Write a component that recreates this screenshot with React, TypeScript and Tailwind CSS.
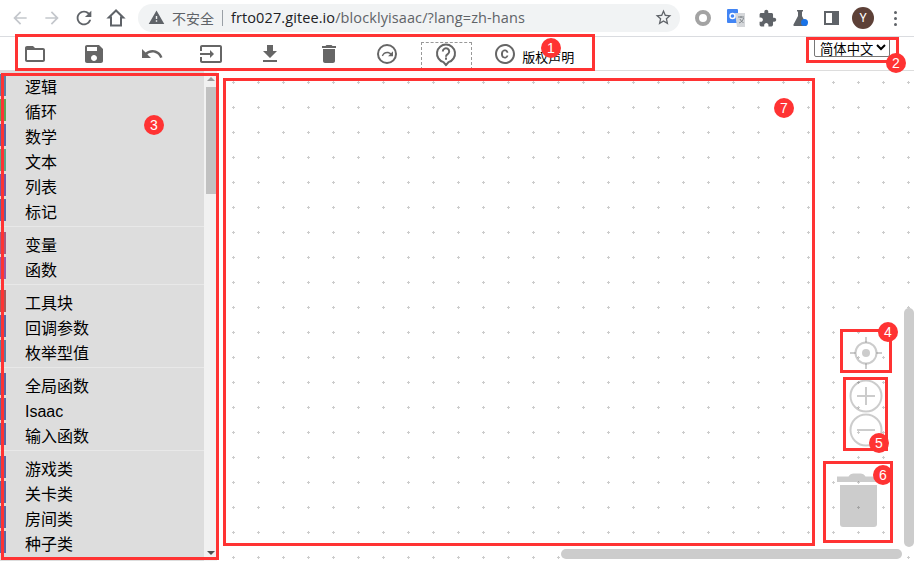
import React from "react";

const RED = "border-[#ff3333]";

function Mi({ d, size = 24, color = "#666", className = "" }: { d: string; size?: number; color?: string; className?: string }) {
  return (
    <svg width={size} height={size} viewBox="0 0 24 24" fill={color} className={className}>
      <path d={d} />
    </svg>
  );
}

const P = {
  back: "M20 11H7.83l5.59-5.59L12 4l-8 8 8 8 1.41-1.41L7.83 13H20v-2z",
  fwd: "M12 4l-1.41 1.41L16.17 11H4v2h12.17l-5.58 5.59L12 20l8-8z",
  refresh: "M17.65 6.35C16.2 4.9 14.21 4 12 4c-4.42 0-7.99 3.58-7.99 8s3.57 8 7.99 8c3.73 0 6.84-2.55 7.73-6h-2.08c-.82 2.33-3.04 4-5.65 4-3.31 0-6-2.69-6-6s2.69-6 6-6c1.66 0 3.14.69 4.22 1.78L13 11h7V4l-2.35 2.35z",
  warn: "M1 21h22L12 2 1 21zm12-3h-2v-2h2v2zm0-4h-2v-4h2v4z",
  star: "M22 9.24l-7.19-.62L12 2 9.19 8.63 2 9.24l5.46 4.73L5.82 21 12 17.27 18.18 21l-1.63-7.03L22 9.24zM12 15.4l-3.76 2.27 1-4.28-3.32-2.88 4.38-.38L12 6.1l1.71 4.04 4.38.38-3.32 2.88 1 4.28L12 15.4z",
  ext: "M20.5 11H19V7c0-1.1-.9-2-2-2h-4V3.5C13 2.12 11.88 1 10.5 1S8 2.12 8 3.5V5H4c-1.1 0-1.99.9-1.99 2v3.8H3.5c1.49 0 2.7 1.21 2.7 2.7s-1.21 2.7-2.7 2.7H2V20c0 1.1.9 2 2 2h3.8v-1.5c0-1.49 1.21-2.7 2.7-2.7 1.49 0 2.7 1.21 2.7 2.7V22H17c1.1 0 2-.9 2-2v-4h1.5c1.38 0 2.5-1.12 2.5-2.5S21.88 11 20.5 11z",
  folder: "M20 6h-8l-2-2H4c-1.1 0-1.99.9-1.99 2L2 18c0 1.1.9 2 2 2h16c1.1 0 2-.9 2-2V8c0-1.1-.9-2-2-2zm0 12H4V8h16v10z",
  save: "M17 3H5c-1.11 0-2 .9-2 2v14c0 1.1.89 2 2 2h14c1.1 0 2-.9 2-2V7l-4-4zm-5 16c-1.66 0-3-1.34-3-3s1.34-3 3-3 3 1.34 3 3-1.34 3-3 3zm3-10H5V5h10v4z",
  undo: "M12.5 8c-2.65 0-5.05.99-6.9 2.6L2 7v9h9l-3.62-3.62c1.39-1.16 3.16-1.88 5.12-1.88 3.54 0 6.55 2.31 7.6 5.5l2.37-.78C21.08 11.03 17.15 8 12.5 8z",
  redo: "M18.4 10.6C16.55 8.99 14.15 8 11.5 8c-4.65 0-8.58 3.03-9.96 7.22L3.9 16c1.05-3.19 4.05-5.5 7.6-5.5 1.95 0 3.73.72 5.12 1.88L13 16h9V7l-3.6 3.6z",
  input: "M21 3.01H3c-1.1 0-2 .9-2 2V9h2V4.99h18v14.03H3V15H1v4.01c0 1.1.9 1.98 2 1.98h18c1.1 0 2-.88 2-1.98v-14c0-1.11-.9-2-2-2zM11 16l4-4-4-4v3H1v2h10v3z",
  dl: "M19 9h-4V3H9v6H5l7 7 7-7zM5 18v2h14v-2H5z",
  del: "M6 19c0 1.1.9 2 2 2h8c1.1 0 2-.9 2-2V7H6v12zM19 4h-3.5l-1-1h-5l-1 1H5v2h14V4z",
  copy: "M10.08 10.86c.05-.33.16-.62.3-.87s.34-.46.59-.62c.24-.15.54-.22.91-.23.23.01.44.05.63.13.2.09.38.21.52.36s.25.33.34.53.13.42.14.64h1.79c-.02-.47-.11-.9-.28-1.29s-.4-.73-.7-1.01-.66-.5-1.08-.66-.88-.23-1.39-.23c-.65 0-1.22.11-1.7.34s-.88.53-1.2.92-.56.84-.71 1.36S8 11.29 8 11.87v.27c0 .58.08 1.12.23 1.64s.39.97.71 1.35.72.69 1.2.91c.48.22 1.05.34 1.7.34.47 0 .91-.08 1.32-.23s.77-.36 1.08-.63.56-.58.74-.94.29-.74.3-1.15h-1.79c-.01.21-.06.4-.15.58s-.21.33-.36.46-.32.23-.52.3c-.19.07-.39.09-.6.1-.36-.01-.66-.08-.89-.23-.25-.16-.45-.37-.59-.62s-.25-.55-.3-.88-.08-.67-.08-1v-.27c0-.35.03-.68.08-1.01zM12 2C6.48 2 2 6.48 2 12s4.48 10 10 10 10-4.48 10-10S17.52 2 12 2zm0 18c-4.41 0-8-3.59-8-8s3.59-8 8-8 8 3.59 8 8-3.59 8-8 8z",
};

function BrowserBar() {
  return (
    <div className="h-[37px] shrink-0 bg-white border-b border-[#dadce0] flex items-center">
      <div className="w-[138px] flex items-center shrink-0">
        <div className="w-[36px] flex justify-center ml-[2px]"><Mi d={P.back} size={20} color="#c4c7cc" /></div>
        <div className="w-[28px] flex justify-center"><Mi d={P.fwd} size={20} color="#c4c7cc" /></div>
        <div className="w-[36px] flex justify-center"><Mi d={P.refresh} size={22} color="#5f6368" /></div>
        <div className="w-[28px] flex justify-center">
          <svg width="20" height="20" viewBox="0 0 20 20" fill="none" stroke="#5f6368" strokeWidth="2">
            <path d="M10 2.500 2.800 9.500H5v8h10v-8h2.200z" strokeLinejoin="miter" />
          </svg>
        </div>
      </div>
      <div className="w-[542px] h-[28px] mb-[1px] rounded-full bg-[#f1f3f4] flex items-center pl-[10px] pr-[7px] shrink-0">
        <Mi d={P.warn} size={17} color="#5f6368" />
        <span className="ml-[7px] text-[14px] text-[#5f6368] font-['Noto_Sans_CJK_SC',sans-serif] leading-none">不安全</span>
        <span className="w-px h-[16px] bg-[#9aa0a6] ml-[8px] mr-[8px]" />
        <span className="text-[14.5px] font-['Open_Sans',sans-serif] tracking-[0.1px] whitespace-nowrap">
          <span className="text-[#202124]">frto027.gitee.io</span>
          <span className="text-[#5f6368]">/blocklyisaac/?lang=zh-hans</span>
        </span>
        <Mi d={P.star} size={19} color="#5f6368" className="ml-auto" />
      </div>
      <div className="flex-1 flex items-center">
        <div className="ml-[15px] w-[16px] h-[16px] rounded-full border-[4.5px] border-[#a3a3a3]" />
        <svg width="18" height="18" viewBox="0 0 18 18" className="ml-[16px]">
          <rect x="0" y="0" width="11" height="14" rx="1" fill="#4285f4" />
          <path d="M8 4h10v14H10z" fill="#d5d7da" />
          <path d="M11 8h6M14 7v2M12 14c3-1 4-3 4.500-5M13 10c.7 1.600 2 3 3.500 3.600" stroke="#80868b" fill="none" />
          <circle cx="5.500" cy="7" r="2.500" fill="none" stroke="#fff" strokeWidth="1.400" />
        </svg>
        <Mi d={P.ext} size={19} color="#5f6368" className="ml-[13px]" />
        <svg width="18" height="18" viewBox="0 0 18 18" className="ml-[14px]">
          <path d="M6 1h6v1.500h-1V7l4.500 8.500c.4.800-.1 1.500-1 1.500H3.500c-.9 0-1.400-.7-1-1.500L7 7V2.500H6z" fill="#5f6368" />
          <circle cx="13.500" cy="13.500" r="3.500" fill="#1a73e8" />
        </svg>
        <div className="ml-[15px] w-[15px] h-[14px] border-[2.5px] border-[#5f6368] flex justify-end">
          <div className="w-[5px] h-full bg-[#5f6368]" />
        </div>
        <div className="ml-[13px] w-[22px] h-[22px] rounded-full bg-[#5d4037] text-white text-[12px] font-['Roboto',sans-serif] flex items-center justify-center">Y</div>
        <div className="ml-[20px] flex flex-col gap-[3px]">
          <i className="w-[3px] h-[3px] rounded-full bg-[#5f6368]" />
          <i className="w-[3px] h-[3px] rounded-full bg-[#5f6368]" />
          <i className="w-[3px] h-[3px] rounded-full bg-[#5f6368]" />
        </div>
      </div>
    </div>
  );
}

function ToolBtn({ children, className = "" }: { children: React.ReactNode; className?: string }) {
  return <div className={`w-[58.75px] h-full flex items-center justify-center shrink-0 ${className}`}>{children}</div>;
}

function Toolbar() {
  return (
    <div className="h-[34px] shrink-0 bg-white border-b border-[#dddddd] flex items-center pl-[5.6px] pr-[24px]">
      <ToolBtn><Mi d={P.folder} /></ToolBtn>
      <ToolBtn><Mi d={P.save} /></ToolBtn>
      <ToolBtn><Mi d={P.undo} /></ToolBtn>
      <ToolBtn><Mi d={P.input} /></ToolBtn>
      <ToolBtn><Mi d={P.dl} /></ToolBtn>
      <ToolBtn><Mi d={P.del} /></ToolBtn>
      <ToolBtn>
        <svg width="24" height="24" viewBox="0 0 24 24" fill="none">
          <circle cx="12" cy="12" r="9" stroke="#666" strokeWidth="2" />
          <g transform="translate(12.500 12) scale(0.55) translate(-12 -12)">
            <path d={P.redo} fill="#666" />
          </g>
        </svg>
      </ToolBtn>
      <ToolBtn>
        <div className="w-[51px] h-[28px] border border-dashed border-[#999] flex items-center justify-center mt-[4px] -mb-[1px]">
          <svg width="24" height="26" viewBox="0 0 24 26" fill="none" stroke="#666" strokeWidth="2" className="-mt-[2px]">
            <path d="M12 2.500a9 9 0 0 1 2.500 17.650l-2.500 3-2.500-3A9 9 0 0 1 12 2.500z" strokeLinejoin="round" />
            <path d="M8.800 9.500a3.200 3.200 0 1 1 4.900 2.700c-1.100.7-1.700 1.300-1.700 2.500" />
            <path d="M12 15.500v2.200" />
          </svg>
        </div>
      </ToolBtn>
      <ToolBtn><Mi d={P.copy} /></ToolBtn>
      <span className="-ml-[12px] mt-[6px] text-[13px] leading-none text-black font-['Noto_Sans_CJK_SC',sans-serif] whitespace-nowrap">版权声明</span>
      <select
        defaultValue="zh"
        className="ml-auto mb-[13px] w-[76px] h-[20px] pl-[1px] border border-[#767676] rounded-[2px] bg-white text-[13.33px] text-black font-['Noto_Sans_CJK_SC',sans-serif] leading-none"
      >
        <option value="zh">简体中文</option>
      </select>
    </div>
  );
}

const groups: { name: string; c: string }[][] = [
  [
    { name: "逻辑", c: "#5b80a5" },
    { name: "循环", c: "#5ba55b" },
    { name: "数学", c: "#5b67a5" },
    { name: "文本", c: "#5ba58c" },
    { name: "列表", c: "#745ba5" },
    { name: "标记", c: "#5b67a5" },
  ],
  [
    { name: "变量", c: "#a55b80" },
    { name: "函数", c: "#995ba5" },
  ],
  [
    { name: "工具块", c: "#a55b5b" },
    { name: "回调参数", c: "#5b67a5" },
    { name: "枚举型值", c: "#5b80a5" },
  ],
  [
    { name: "全局函数", c: "#5b67a5" },
    { name: "Isaac", c: "#5b67a5" },
    { name: "输入函数", c: "#5b67a5" },
  ],
  [
    { name: "游戏类", c: "#5b67a5" },
    { name: "关卡类", c: "#5b67a5" },
    { name: "房间类", c: "#5b67a5" },
    { name: "种子类", c: "#5b67a5" },
  ],
];

function Sidebar() {
  return (
    <div className="w-[217px] shrink-0 flex h-full">
      <div className="w-[204px] bg-[#dddddd] pt-[3px] overflow-hidden">
        {groups.map((g, i) => (
          <div key={i}>
            {i > 0 && <div className="h-[8px] pt-[2px]"><div className="h-px bg-[#e8e8e8]" /></div>}
            {g.map((r) => (
              <div key={r.name} className="h-[22px] mb-[3px] flex items-center">
                <div className="w-[6px] h-full shrink-0" style={{ backgroundColor: r.c }} />
                <span className="ml-[19px] mt-[6px] text-[16px] leading-none text-black font-['Liberation_Sans','Noto_Sans_CJK_SC',sans-serif]">{r.name}</span>
              </div>
            ))}
          </div>
        ))}
      </div>
      <div className="w-[13px] bg-[#f1f1f1] flex flex-col items-center pt-[6px] pb-[6px]">
        <div className="w-0 h-0 border-x-[4px] border-x-transparent border-b-[4px] border-b-[#9a9a9a]" />
        <div className="w-full mt-[6px] h-[107px] pl-[2px]"><div className="w-full h-full bg-[#c1c1c1]" /></div>
        <div className="mt-auto w-0 h-0 border-x-[4px] border-x-transparent border-t-[4px] border-t-[#505050]" />
      </div>
    </div>
  );
}

function Workspace() {
  return (
    <div className="flex-1 relative bg-white overflow-hidden">
      <svg className="absolute inset-0 w-full h-full">
        <defs>
          <pattern id="dots" x="15" y="10" width="25" height="25" patternUnits="userSpaceOnUse">
            <path d="M0 1.500h3M1.500 0v3" stroke="#cccccc" strokeWidth="1" />
          </pattern>
        </defs>
        <rect width="100%" height="100%" fill="url(#dots)" />
      </svg>

      {/* target */}
      <svg width="34" height="34" viewBox="0 0 34 34" fill="none" stroke="#000" strokeOpacity="0.2" strokeWidth="2" className="absolute left-[632px] top-[265px]">
        <circle cx="17" cy="17" r="10.500" />
        <circle cx="17" cy="17" r="4" fill="#000" fillOpacity="0.2" stroke="none" />
        <path d="M17 1v5.500M17 27.500V33M1 17h5.500M27.500 17H33" />
      </svg>
      {/* zoom */}
      <svg width="36" height="70" viewBox="0 0 36 70" fill="none" stroke="#000" strokeOpacity="0.2" strokeWidth="2" className="absolute left-[631px] top-[307px]">
        <circle cx="18" cy="18" r="15.500" />
        <path d="M18 9v18M9 18h18" />
        <circle cx="18" cy="52" r="15.500" />
        <path d="M9 52h18" />
      </svg>
      {/* trash */}
      <svg width="44" height="56" viewBox="0 0 44 56" fill="#000" fillOpacity="0.2" className="absolute left-[620px] top-[402px]">
        <path d="M0 3.500h11.500c1-1.800 3-3 5-3h7c2 0 4 1.200 5 3H44V9H0z" />
        <path d="M3 12h37v39a3 3 0 0 1-3 3H6a3 3 0 0 1-3-3z" />
      </svg>

      {/* workspace scrollbars */}
      <div className="absolute left-[687px] top-[237px] w-[10px] h-[239px] rounded-full bg-[#cccccc]" />
      <div className="absolute left-[344px] top-[478px] w-[341px] h-[10px] rounded-full bg-[#cccccc]" />
    </div>
  );
}

function Box({ className }: { className: string }) {
  return <div className={`absolute border-[3px] ${RED} pointer-events-none ${className}`} />;
}

function Badge({ n, className }: { n: number; className: string }) {
  return (
    <div className={`absolute w-[20px] h-[20px] rounded-full bg-[#ff3333] text-white text-[14px] leading-none font-['Liberation_Sans',sans-serif] flex items-center justify-center ${className}`}>
      {n}
    </div>
  );
}

export default function App() {
  return (
    <div className="w-[914px] h-[561px] relative overflow-hidden bg-white flex flex-col">
      <BrowserBar />
      <Toolbar />
      <div className="flex-1 flex min-h-0">
        <Sidebar />
        <Workspace />
      </div>

      <Box className="left-[15px] top-[34px] w-[580px] h-[37px]" />
      <Box className="left-[806px] top-[37px] w-[93px] h-[26px]" />
      <Box className="left-[1px] top-[73px] w-[218px] h-[487px]" />
      <Box className="left-[223px] top-[78px] w-[592px] h-[468px]" />
      <Box className="left-[840px] top-[329px] w-[52px] h-[44px]" />
      <Box className="left-[843px] top-[377px] w-[45px] h-[74px]" />
      <Box className="left-[823px] top-[461px] w-[70px] h-[82px]" />

      <Badge n={1} className="left-[541px] top-[38px]" />
      <Badge n={2} className="left-[886px] top-[53px]" />
      <Badge n={3} className="left-[144px] top-[115px]" />
      <Badge n={4} className="left-[878px] top-[322px]" />
      <Badge n={5} className="left-[869px] top-[433px]" />
      <Badge n={6} className="left-[873px] top-[465px]" />
      <Badge n={7} className="left-[774px] top-[98px]" />
    </div>
  );
}
